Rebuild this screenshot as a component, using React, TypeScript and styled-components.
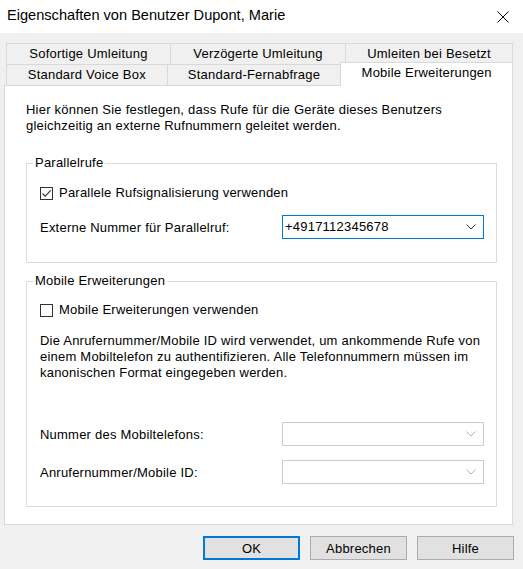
import styled, { createGlobalStyle } from 'styled-components';

const GlobalStyle = createGlobalStyle`
    html, body {
        margin: 0;
        padding: 0;
        background: #f0f0f0;
    }
    body {
        font-family: "Liberation Sans", Arial, sans-serif;
        font-size: 13px;
        letter-spacing: 0.22px;
        color: #000;
    }
`;

const Window = styled.div`
    width: 523px;
    height: 569px;
    display: flex;
    flex-direction: column;
    background: #f0f0f0;
    overflow: hidden;
`;

const TitleBar = styled.div`
    height: 33px;
    flex-shrink: 0;
    background: #fff;
    display: flex;
    align-items: center;
    justify-content: space-between;
    padding: 0 14px 0 7px;
`;

const Title = styled.span`
    font-size: 14.6px;
    letter-spacing: 0;
    line-height: 20px;
    margin-top: -3px;
`;

const CloseButton = styled.button`
    border: 0;
    padding: 0;
    background: transparent;
    width: 12px;
    height: 12px;
    display: flex;
    margin-top: 1px;
`;

const Body = styled.div`
    padding: 10px 10px 0 4px;
`;

const TabRow = styled.div`
    display: flex;
    padding-left: 2px;
`;

const Tab = styled.div<{ $width: number; $active?: boolean }>`
    width: ${(p) => p.$width}px;
    box-sizing: border-box;
    height: ${(p) => (p.$active ? 24 : 21)}px;
    margin-left: -1px;
    margin-top: ${(p) => (p.$active ? -2 : 0)}px;
    margin-bottom: ${(p) => (p.$active ? -1 : 0)}px;
    border: 1px solid #d9d9d9;
    border-bottom: 0;
    background: ${(p) => (p.$active ? '#fff' : '#f0f0f0')};
    position: relative;
    z-index: ${(p) => (p.$active ? 1 : 0)};
    padding-top: 2px;
    line-height: 16px;
    text-align: center;
    white-space: nowrap;

    &:first-child {
        margin-left: 0;
    }
`;

const TopRow = styled(TabRow)`
    & > ${Tab} {
        height: 21px;
    }
`;

const Panel = styled.div`
    width: 509px;
    box-sizing: border-box;
    border: 1px solid #d9d9d9;
    background: #fff;
    padding: 16px 15px 17px 21px;
`;

const Intro = styled.p`
    margin: 0 0 29px;
    line-height: 16px;
`;

const GroupBox = styled.div<{ $top: number; $bottom: number }>`
    position: relative;
    border: 1px solid #dcdcdc;
    padding: ${(p) => p.$top}px 12px ${(p) => p.$bottom}px 13px;
    display: flex;
    flex-direction: column;

    & + & {
        margin-top: 18px;
    }
`;

const Caption = styled.span`
    position: absolute;
    top: -9px;
    left: 6px;
    padding: 0 2px;
    background: #fff;
    line-height: 16px;
`;

const CheckRow = styled.label`
    display: flex;
    align-items: center;
    gap: 6px;
    line-height: 16px;
`;

const CheckBox = styled.span`
    width: 13px;
    height: 13px;
    box-sizing: border-box;
    border: 1px solid #333;
    background: #fff;
    display: flex;
    align-items: center;
    justify-content: center;
`;

const FieldRow = styled.div<{ $gap: number }>`
    display: flex;
    align-items: center;
    justify-content: space-between;
    margin-top: ${(p) => p.$gap}px;
`;

const Description = styled.p`
    margin: 15px 0 0;
    line-height: 16px;
`;

const Combo = styled.div<{ $disabled?: boolean }>`
    width: 202px;
    height: 24px;
    box-sizing: border-box;
    border: 1px solid ${(p) => (p.$disabled ? '#cccccc' : '#0078d7')};
    background: #fff;
    display: flex;
    align-items: center;
    justify-content: space-between;
    padding: 0 7px 0 2px;
`;

const ComboValue = styled.span`
    line-height: 16px;
`;

const Footer = styled.div`
    display: flex;
    justify-content: flex-end;
    gap: 10px;
    margin-top: 11px;
    padding-right: 9px;
`;

const Button = styled.button<{ $primary?: boolean }>`
    width: 97px;
    height: 24px;
    box-sizing: border-box;
    background: #e1e1e1;
    border: ${(p) => (p.$primary ? '2px solid #0078d7' : '1px solid #adadad')};
    font-family: "Liberation Sans", Arial, sans-serif;
    font-size: 13px;
    letter-spacing: 0.22px;
    color: #000;
    padding: 0;
`;

const Chevron = ({ color }: { color: string }) => (
    <svg width="10" height="6" viewBox="0 0 10 6">
        <path d="M0.5 0.5 L5 5 L9.5 0.5" fill="none" stroke={color} strokeWidth="1" />
    </svg>
);

const CheckMark = () => (
    <svg width="11" height="11" viewBox="0 0 11 11">
        <path d="M1.5 5.5 L4.2 8.2 L9.8 2.3" fill="none" stroke="#333" strokeWidth="1.1" />
    </svg>
);

function App() {
    return (
        <Window>
            <GlobalStyle />
            <TitleBar>
                <Title>Eigenschaften von Benutzer Dupont, Marie</Title>
                <CloseButton aria-label="Schließen">
                    <svg width="12" height="12" viewBox="0 0 12 12">
                        <path d="M0.5 0.5 L11.5 11.5 M11.5 0.5 L0.5 11.5" stroke="#000" strokeWidth="1" />
                    </svg>
                </CloseButton>
            </TitleBar>

            <Body>
                <TopRow>
                    <Tab $width={165}>Sofortige Umleitung</Tab>
                    <Tab $width={176}>Verzögerte Umleitung</Tab>
                    <Tab $width={168}>Umleiten bei Besetzt</Tab>
                </TopRow>
                <TabRow>
                    <Tab $width={162}>Standard Voice Box</Tab>
                    <Tab $width={175}>Standard-Fernabfrage</Tab>
                    <Tab $width={173} $active>Mobile Erweiterungen</Tab>
                </TabRow>

                <Panel>
                    <Intro>
                        Hier können Sie festlegen, dass Rufe für die Geräte dieses Benutzers
                        <br />
                        gleichzeitig an externe Rufnummern geleitet werden.
                    </Intro>

                    <GroupBox $top={21} $bottom={23}>
                        <Caption>Parallelrufe</Caption>
                        <CheckRow>
                            <CheckBox>
                                <CheckMark />
                            </CheckBox>
                            Parallele Rufsignalisierung verwenden
                        </CheckRow>
                        <FieldRow $gap={14}>
                            <span>Externe Nummer für Parallelruf:</span>
                            <Combo>
                                <ComboValue>+4917112345678</ComboValue>
                                <Chevron color="#333" />
                            </Combo>
                        </FieldRow>
                    </GroupBox>

                    <GroupBox $top={20} $bottom={22}>
                        <Caption>Mobile Erweiterungen</Caption>
                        <CheckRow>
                            <CheckBox />
                            Mobile Erweiterungen verwenden
                        </CheckRow>
                        <Description>
                            Die Anrufernummer/Mobile ID wird verwendet, um ankommende Rufe von
                            <br />
                            einem Mobiltelefon zu authentifizieren. Alle Telefonnummern müssen im
                            <br />
                            kanonischen Format eingegeben werden.
                        </Description>
                        <FieldRow $gap={41}>
                            <span>Nummer des Mobiltelefons:</span>
                            <Combo $disabled>
                                <ComboValue />
                                <Chevron color="#b4b4b4" />
                            </Combo>
                        </FieldRow>
                        <FieldRow $gap={14}>
                            <span>Anrufernummer/Mobile ID:</span>
                            <Combo $disabled>
                                <ComboValue />
                                <Chevron color="#b4b4b4" />
                            </Combo>
                        </FieldRow>
                    </GroupBox>
                </Panel>
            </Body>

            <Footer>
                <Button $primary>OK</Button>
                <Button>Abbrechen</Button>
                <Button>Hilfe</Button>
            </Footer>
        </Window>
    );
}

export default App;
